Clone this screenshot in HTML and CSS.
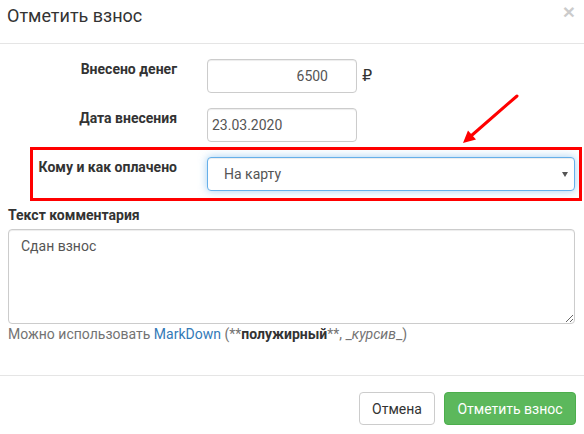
FILE: index.html
```html
<!DOCTYPE html>
<html lang="ru">
<head>
<meta charset="utf-8">
<title>Отметить взнос</title>
<link rel="stylesheet" href="styles.css">
</head>
<body>
<div class="modal">
  <div class="modal-header">
    <h4 class="modal-title">Отметить взнос</h4>
    <button class="close" type="button">×</button>
  </div>
  <div class="modal-body">
    <div class="form-row">
      <label class="form-label">Внесено денег</label>
      <div class="control">
        <input class="input input-money" type="text" value="6500">
        <span class="currency">₽</span>
      </div>
    </div>
    <div class="form-row">
      <label class="form-label">Дата внесения</label>
      <div class="control">
        <input class="input input-date" type="text" value="23.03.2020">
      </div>
    </div>
    <div class="form-row">
      <label class="form-label">Кому и как оплачено</label>
      <div class="control select-wrap">
        <select class="input select">
          <option>На карту</option>
        </select>
        <span class="caret"></span>
      </div>
    </div>
    <div class="comment">
      <label class="comment-label">Текст комментария</label>
      <textarea class="textarea">Сдан взнос</textarea>
      <p class="help">Можно использовать <a class="link" href="#">MarkDown</a> (**<b>полужирный</b>**, _<i>курсив</i>_)</p>
    </div>
  </div>
  <div class="modal-footer">
    <button class="btn btn-default" type="button">Отмена</button>
    <button class="btn btn-success" type="button">Отметить взнос</button>
  </div>
  <div class="annot-box"></div>
  <svg class="annot-arrow" width="584" height="434" viewBox="0 0 584 434">
    <line x1="517" y1="96" x2="471" y2="136" stroke="#ff0000" stroke-width="3" stroke-linecap="round"/>
    <polygon points="463,143 476,139.5 468,130.5" fill="#ff0000"/>
  </svg>
</div>
</body>
</html>
```

FILE: styles.css
```css
* { box-sizing: border-box; }
html, body { margin: 0; padding: 0; background: #fff; }
body {
  font-family: Roboto, "Liberation Sans", Arial, sans-serif;
  font-size: 14px;
  line-height: 20px;
  color: #333;
  width: 584px;
  height: 434px;
  overflow: hidden;
}
.modal { position: relative; width: 584px; height: 434px; }

.modal-header {
  display: flex;
  justify-content: space-between;
  align-items: flex-start;
  height: 44px;
  border-bottom: 1px solid #e5e5e5;
  padding: 0 9px 0 7px;
}
.modal-title {
  margin: 0;
  padding-top: 5px;
  font-size: 18px;
  font-weight: 400;
  line-height: 22px;
  color: #333;
}
.close {
  margin: 0;
  padding: 0;
  border: 0;
  background: transparent;
  font-family: "Liberation Sans", Arial, sans-serif;
  font-size: 21px;
  font-weight: 700;
  line-height: 21px;
  color: #000;
  opacity: .2;
  margin-top: 1px;
}

.modal-body {
  padding: 15px 9px 31px 8px;
}
.form-row {
  display: grid;
  grid-template-columns: 169px 368px;
  column-gap: 30px;
  margin-bottom: 15px;
  height: 34px;
}
.form-label {
  text-align: right;
  font-weight: 700;
  line-height: 20px;
  color: #333;
}
.control { display: flex; align-items: center; gap: 5px; }

.input {
  height: 34px;
  border: 1px solid #ccc;
  border-radius: 4px;
  font-family: Roboto, "Liberation Sans", Arial, sans-serif;
  font-size: 14px;
  color: #555;
  background: #fff;
  box-shadow: inset 0 1px 1px rgba(0,0,0,.075);
  outline: none;
}
.input-money { width: 150px; text-align: right; padding: 0 28px 0 4px; }
.input-date { width: 150px; padding: 0 4px; }
.currency { font-family: "DejaVu Sans", Roboto, sans-serif; font-size: 16px; color: #333; margin-left: 0; }

.select-wrap { position: relative; }
.select {
  width: 368px;
  -webkit-appearance: none;
  appearance: none;
  padding: 0 16px;
  border-color: #66afe9;
  box-shadow: inset 0 1px 1px rgba(0,0,0,.075), 0 0 8px rgba(102,175,233,.6);
}
.caret {
  position: absolute;
  right: 7px;
  top: 15px;
  width: 0;
  height: 0;
  border-left: 3.5px solid transparent;
  border-right: 3.5px solid transparent;
  border-top: 5px solid #555;
}

.comment { margin-top: -1px; }
.comment-label {
  display: block;
  font-weight: 700;
  margin-bottom: 4px;
}
.textarea {
  display: block;
  width: 567px;
  height: 95px;
  border: 1px solid #ccc;
  border-radius: 4px;
  padding: 6px 12px;
  font-family: Roboto, "Liberation Sans", Arial, sans-serif;
  font-size: 14px;
  line-height: 20px;
  color: #555;
  box-shadow: inset 0 1px 1px rgba(0,0,0,.075);
  resize: vertical;
}
.help { margin: 0; color: #737373; }
.help b { color: #333; }
.link { color: #337ab7; text-decoration: none; }

.modal-footer {
  border-top: 1px solid #e5e5e5;
  padding: 16px 8px 0 0;
  display: flex;
  justify-content: flex-end;
  gap: 9px;
}
.btn {
  height: 33px;
  border: 1px solid #ccc;
  border-radius: 4px;
  font-family: Roboto, "Liberation Sans", Arial, sans-serif;
  font-size: 14px;
  line-height: 20px;
  padding: 0 12px;
}
.btn-default { background: #fff; color: #333; width: 76px; }
.btn-success { background: #5cb85c; border-color: #4cae4c; color: #fff; width: 132px; }

.annot-box {
  position: absolute;
  left: 30px;
  top: 147px;
  width: 552px;
  height: 54px;
  border: 3px solid #ff0000;
  pointer-events: none;
}
.annot-arrow { position: absolute; left: 0; top: 0; pointer-events: none; }
```
